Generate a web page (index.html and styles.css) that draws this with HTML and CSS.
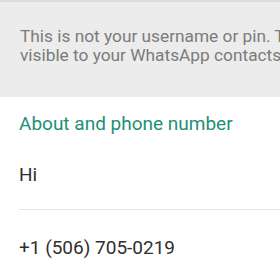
FILE: index.html
```html
<!DOCTYPE html>
<html>
<head>
<meta charset="utf-8">
<link rel="stylesheet" href="styles.css">
</head>
<body>
<div class="info">
  <p class="hint">This is not your username or pin. This name will be<br>visible to your WhatsApp contacts.</p>
</div>
<div class="section">
  <div class="heading">About and phone number</div>
  <div class="row about">Hi</div>
  <div class="divider"></div>
  <div class="row phone">+1 (506) 705-0219</div>
</div>
</body>
</html>
```
FILE: styles.css
```css
html, body {
  margin: 0;
  padding: 0;
  background: #ffffff;
  overflow: hidden;
  width: 280px;
  height: 280px;
  font-family: Roboto, "Noto Sans", sans-serif;
}
.info {
  background: #ececec;
  border-top: 2px solid #dcdcdc;
  height: 95px;
  padding: 0 0 0 20px;
  box-sizing: content-box;
}
.hint {
  margin: 0;
  padding-top: 25px;
  font-size: 17.3px;
  line-height: 19px;
  color: #7b7b7b;
  white-space: nowrap;
}
.section {
  padding-left: 19px;
}
.heading {
  padding-top: 15px;
  font-size: 19px;
  line-height: 24px;
  color: #1d8f76;
  white-space: nowrap;
}
.row {
  font-size: 19px;
  line-height: 24px;
  color: #2f2f2f;
  white-space: nowrap;
}
.about {
  padding-top: 27px;
}
.divider {
  height: 1px;
  background: #e3e3e3;
  margin-top: 22px;
}
.phone {
  padding-top: 26px;
}
```
